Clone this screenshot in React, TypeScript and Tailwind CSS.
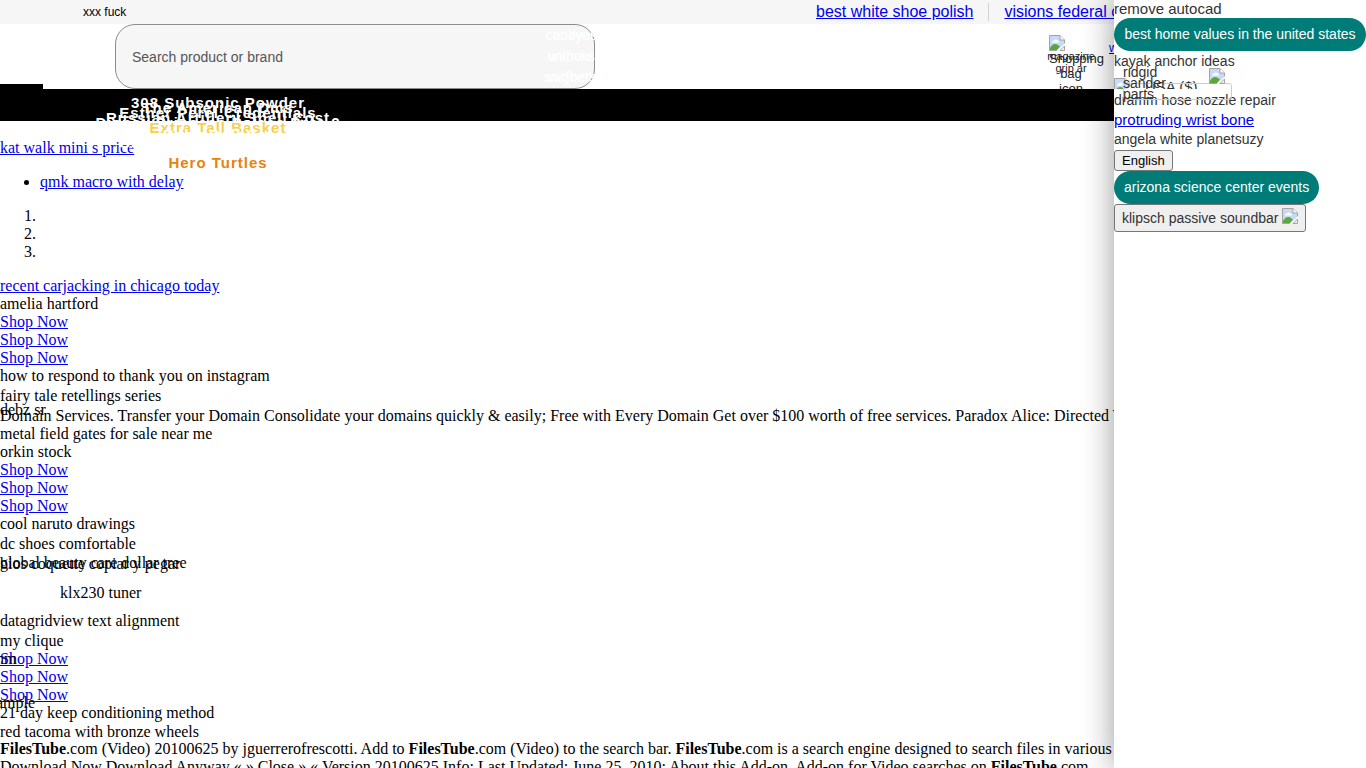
import React from 'react';

type BrokenImageProps = {
    className?: string;
};

const BrokenImage: React.FC<BrokenImageProps> = ({ className }) => (
    <svg className={className} width="16" height="16" viewBox="0 0 16 16" aria-hidden="true">
        <path d="M.5 15.500V.5H11l4.500 4.500V9L9 15.500Z" fill="#c6d9f7" stroke="#a3a3a3" />
        <path d="M11 .5V5h4.500" fill="#fff" stroke="#a3a3a3" />
        <path d="M3 7.500c0-1.500 1-2 2-2 .5-1.500 3-1.500 3.500 0 1 0 1.500.8 1.500 2Z" fill="#fff" />
        <path d="M1 15v-2c2-3.500 5-5 8-3l2 1.500L8 15Z" fill="#5aa83c" />
        <path d="M7.500 16 16 8v2.500L10 16Z" fill="#fff" />
        <path d="M11 15.500h4.500V11Z" fill="#eef3fb" stroke="#a3a3a3" />
    </svg>
);

const ShopLinks: React.FC = () => (
    <>
        {[1, 2, 3].map((n) => (
            <a key={n} href="#shop" className="block w-fit text-[#0000ee] underline">Shop Now</a>
        ))}
    </>
);

const App: React.FC = () => {
    const navItems = [
        { title: "308 Subsonic Powder", place: "top-[5px] text-white" },
        { title: "The American Dms", place: "top-[10px] text-white" },
        { title: "Esther Perel Credentials", place: "top-[15px] text-white" },
        { title: "Russian Artillery Shell Cost", place: "top-[20px] text-white" },
        { title: "Disney Princess Palace Pets 2", place: "top-[25px] text-white" },
        { title: "Extra Tall Basket", place: "top-[30px] text-[#f6d04d]" },
        { title: "Baby Doll Set", place: "top-[37px] text-white" },
        { title: "Summer Camps Near Me", place: "top-[45px] text-white" },
        { title: "Hero Turtles", place: "top-[65px] text-[#e8820c]" }
    ];

    return (
        <div className="relative h-screen overflow-hidden bg-white font-['Liberation_Serif',serif] text-[16px] leading-[18px] text-black">
            <header className="font-['Liberation_Sans',sans-serif]">
                <div className="flex h-6 items-center bg-[#f6f6f6]">
                    <span className="ml-[83px] text-[12px]">xxx fuck</span>
                    <div className="absolute left-[816px] flex items-center gap-[15px] whitespace-nowrap text-[#0000ee]">
                        <a href="#polish" className="underline">best white shoe polish</a>
                        <span className="h-[18px] w-px bg-[#d3d3d3]" />
                        <a href="#credit" className="underline">visions federal credit union</a>
                    </div>
                </div>

                <div className="relative flex h-[65px]">
                    <input
                        type="text"
                        aria-label="Search product or brand"
                        placeholder="Search product or brand"
                        className="ml-[115px] w-[480px] rounded-[20px] border border-[#8c8c8c] bg-[#f6f6f6] px-4 text-[14px] placeholder:text-[#555]"
                    />
                    <div className="absolute top-px left-[541px] w-[60px] text-center text-[14px] leading-[21px] text-white">
                        candycs without snigbet's
                    </div>
                    <div className="absolute top-px left-[541px] w-[60px] text-center text-[14px] leading-[21px] text-white">
                        cookyes unlocks surfbets
                    </div>
                    <div className="absolute top-[11px] left-[1046px] h-[54px] w-[50px] text-center text-[#222]">
                        <BrokenImage className="ml-[3px]" />
                        <p className="absolute top-[15px] left-0 w-[50px] text-[11px] leading-[12px]">magazine grip ar</p>
                        <p className="absolute top-[16px] left-[3px] w-[44px] text-[13px] leading-[15px]">Shopping bag icon</p>
                    </div>
                    <a href="#wish" className="absolute top-[15px] left-[1109px] text-[12px] text-[#0000ee] underline">wishlist</a>
                </div>

                <nav className="relative h-8 bg-black">
                    <div className="absolute -top-[5px] left-0 h-[5px] w-[43px] bg-black" />
                    <ul className="absolute top-0 left-[68px] z-10 w-[300px] text-center text-[15px] font-bold tracking-[1px]">
                        {navItems.map((item) => (
                            <li key={item.title} className={`absolute w-full whitespace-nowrap ${item.place}`}>{item.title}</li>
                        ))}
                    </ul>
                </nav>
            </header>

            <main className="pt-[18px]">
                <a href="#walk" className="text-[#0000ee] underline">kat walk mini s price</a>
                <ul className="my-4 list-disc pl-10">
                    <li><a href="#qmk" className="text-[#0000ee] underline">qmk macro with delay</a></li>
                </ul>
                <ol className="my-4 list-decimal pl-10">
                    <li />
                    <li />
                    <li />
                </ol>
                <a href="#news" className="text-[#0000ee] underline">recent carjacking in chicago today</a>
                <p>amelia hartford</p>
                <ShopLinks />
                <p>how to respond to thank you on instagram</p>
                <p className="leading-[22px]">fairy tale retellings series</p>
                <div className="relative whitespace-nowrap">
                    <span className="absolute -top-[6px] left-0">debz sr</span>
                    <p>Domain Services. Transfer your Domain Consolidate your domains quickly &amp; easily; Free with Every Domain Get over $100 worth of free services. Paradox Alice: Directed With</p>
                </div>
                <p>metal field gates for sale near me</p>
                <p>orkin stock</p>
                <ShopLinks />
                <p>cool naruto drawings</p>
                <p className="leading-[22px]">dc shoes comfortable</p>
                <div className="relative">
                    <span className="absolute -top-px left-0">global beauty care dollar tree</span>
                    <p>bios coquette copiar y pegar</p>
                </div>
                <p className="ml-[60px] pt-[11px] pb-[10px]">klx230 tuner</p>
                <p>datagridview text alignment</p>
                <p className="pt-[2px]">my clique</p>
                <div className="relative">
                    <span className="absolute top-0 -left-1">nm</span>
                    <span className="absolute top-[44px] -left-1">ample</span>
                    <ShopLinks />
                </div>
                <p>21 day keep conditioning method</p>
                <p className="pt-[2px] leading-4">red tacoma with bronze wheels</p>
                <p className="whitespace-nowrap">
                    <b>FilesTube</b>.com (Video) 20100625 by jguerrerofrescotti. Add to <b>FilesTube</b>.com (Video) to the search bar. <b>FilesTube</b>.com is a search engine designed to search files in various
                    <br />
                    Download Now Download Anyway « » Close » « Version 20100625 Info: Last Updated: June 25, 2010: About this Add-on. Add-on for Video searches on <b>FilesTube</b>.com.
                </p>
            </main>

            <aside className="absolute inset-y-0 right-0 z-20 flex w-[252px] flex-col items-start bg-white font-['Liberation_Sans',sans-serif] text-[14px] leading-[20px] text-[#333] shadow-[0_0_30px_rgba(0,0,0,0.4)]">
                <p className="-mt-px h-[19px] text-[15px]">remove autocad</p>
                <button type="button" className="h-[33px] w-full rounded-full bg-[#007c78] px-2 pb-px whitespace-nowrap text-white">best home values in the united states</button>
                <p>kayak anchor ideas</p>
                <div className="relative h-[19px] w-full">
                    <div className="absolute top-[7px] left-0 flex h-[11px] overflow-hidden text-[15px]">
                        <BrokenImage className="shrink-0" />
                        <span className="ml-[15px] leading-[18px]">USA ($)</span>
                    </div>
                    <div className="absolute top-[12px] left-[9px] h-[17px] w-[109px] rounded-[3px] border border-[#ccc]" />
                    <p className="absolute -top-[4px] left-[9px] w-[50px] leading-[11px]">ridgid sander parts</p>
                    <BrokenImage className="absolute -top-[3px] left-[95px]" />
                </div>
                <p>dramm hose nozzle repair</p>
                <a href="#wrist" className="text-[15px] text-[#0000ee] underline">protruding wrist bone</a>
                <p className="h-5 leading-[18px]">angela white planetsuzy</p>
                <button type="button" className="h-[21px] rounded-[3px] border border-[#767676] bg-[#efefef] px-[7px] text-[13px] leading-[18px] text-black">English</button>
                <button type="button" className="h-[33px] rounded-full bg-[#007c78] px-[10px] pb-px text-white">arizona science center events</button>
                <button type="button" className="flex h-[28px] items-center gap-1 rounded-[3px] border border-[#767676] bg-[#efefef] px-[7px]">
                    klipsch passive soundbar
                    <BrokenImage className="mb-1" />
                </button>
            </aside>
        </div>
    );
};

export default App;
